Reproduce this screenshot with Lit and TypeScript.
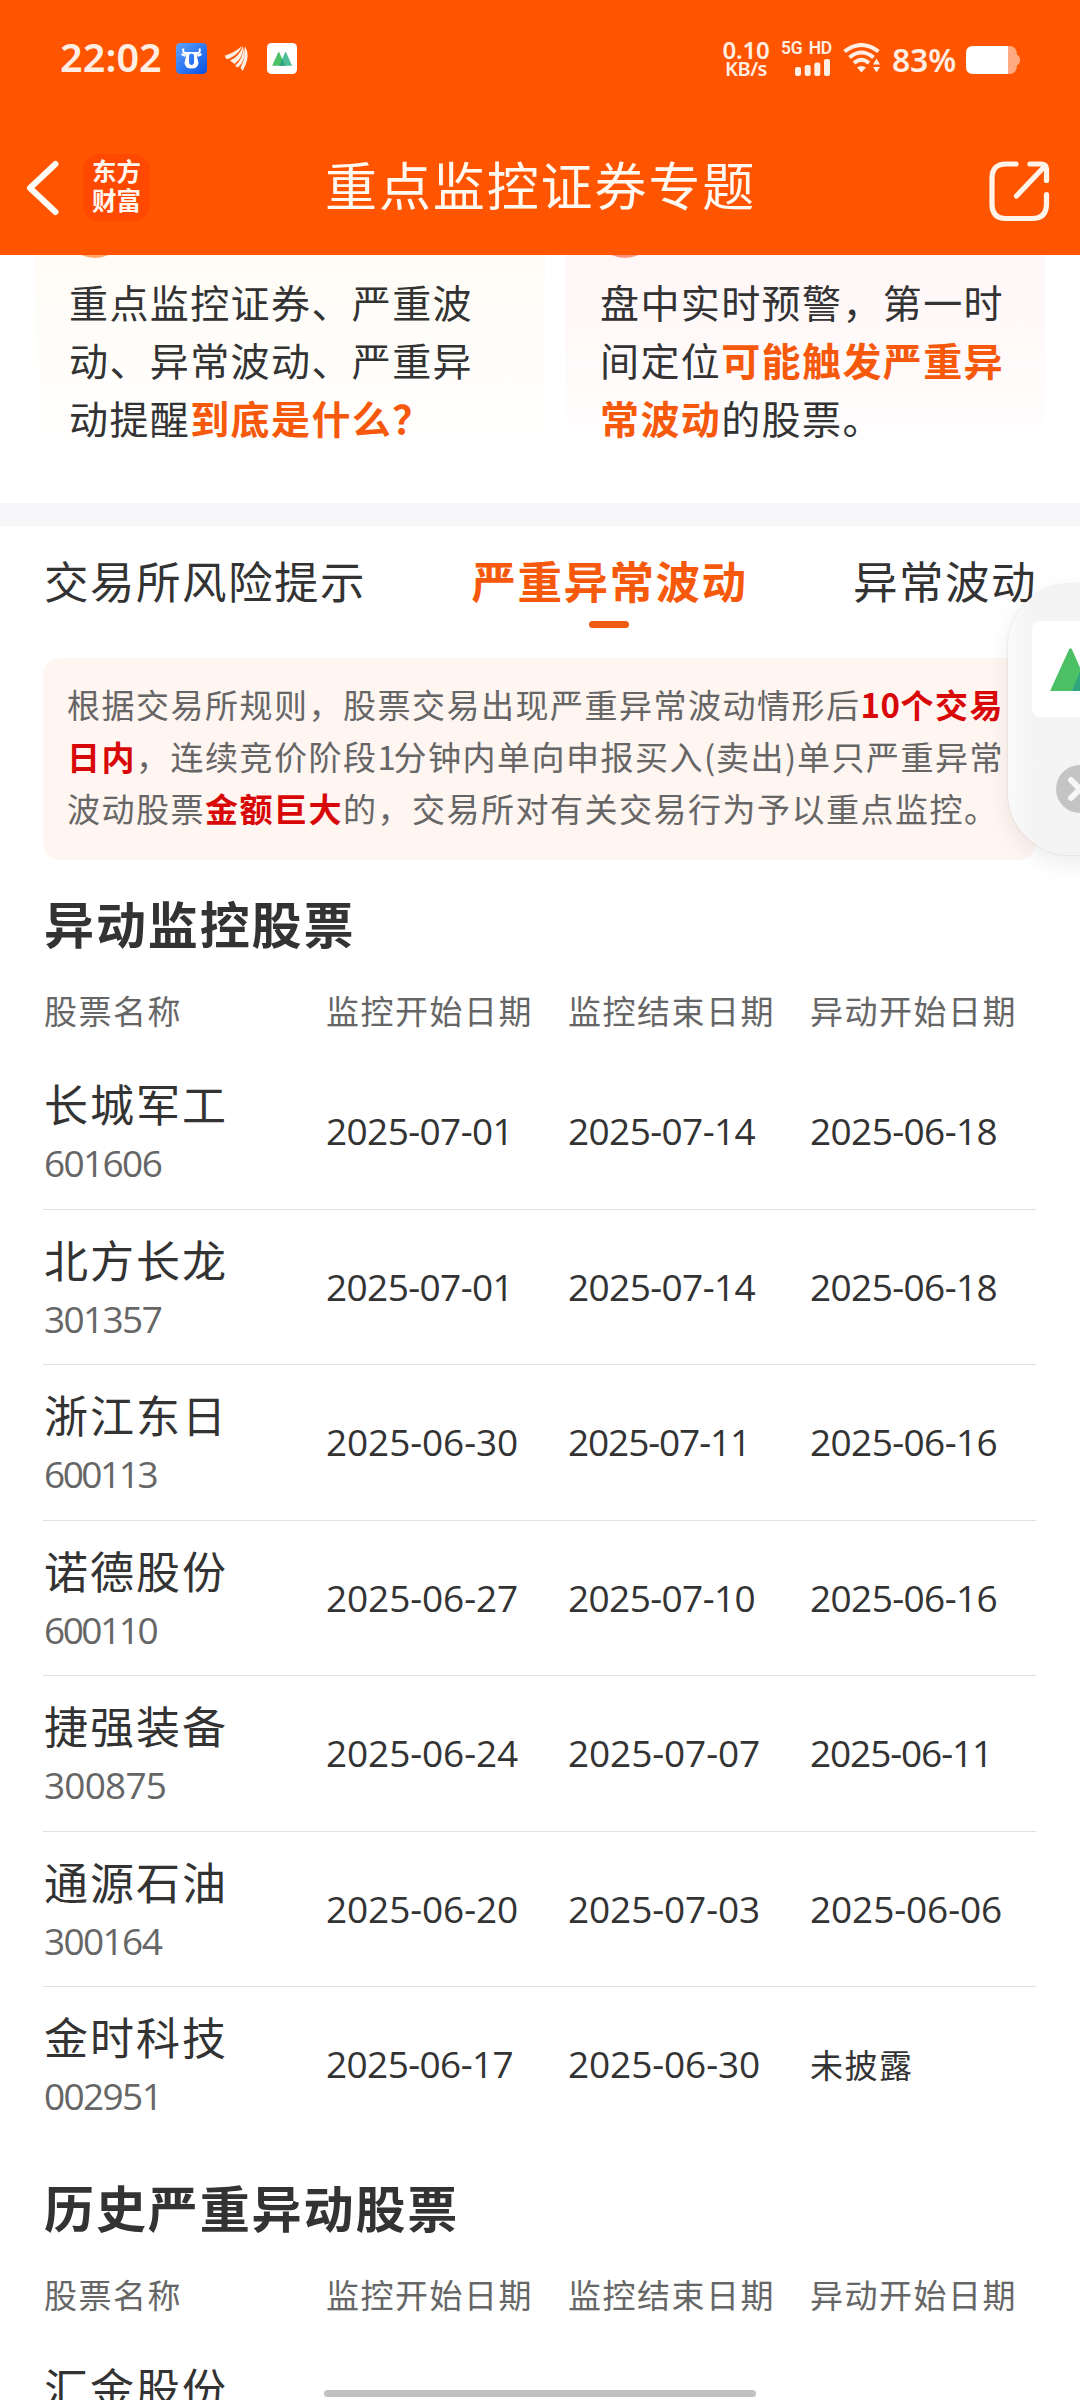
import { LitElement, html, css, svg } from "lit";
import { customElement, property } from "lit/decorators.js";
import { styleMap } from "lit/directives/style-map.js";

interface Stock {
  name: string;
  code?: string;
  start?: string;
  end?: string;
  move?: string;
}

const ACTIVE: Stock[] = [
  { name: "长城军工", code: "601606", start: "2025-07-01", end: "2025-07-14", move: "2025-06-18" },
  { name: "北方长龙", code: "301357", start: "2025-07-01", end: "2025-07-14", move: "2025-06-18" },
  { name: "浙江东日", code: "600113", start: "2025-06-30", end: "2025-07-11", move: "2025-06-16" },
  { name: "诺德股份", code: "600110", start: "2025-06-27", end: "2025-07-10", move: "2025-06-16" },
  { name: "捷强装备", code: "300875", start: "2025-06-24", end: "2025-07-07", move: "2025-06-11" },
  { name: "通源石油", code: "300164", start: "2025-06-20", end: "2025-07-03", move: "2025-06-06" },
  { name: "金时科技", code: "002951", start: "2025-06-17", end: "2025-06-30", move: "未披露" },
];

const HISTORY: Stock[] = [{ name: "汇金股份" }];

const COLUMNS = ["股票名称", "监控开始日期", "监控结束日期", "异动开始日期"];

/* Figures are set proportionally: every 1 in a number takes about 5px less. */
const tracking = (text = "", base = 0) => {
  const ones = text.split("1").length - 1;
  return styleMap({ letterSpacing: `${(base - (5 * ones) / Math.max(text.length, 1)).toFixed(2)}px` });
};

const peaks = svg`
  <path d="M1.5 43 20 2.5Q21.5 0 23 2.5L41 43Q41 44 40 44H2Q1 44 1.5 43Z" fill="#4cc065" />
  <path d="M23 43 41 2.5Q42.500 0 44 2.500L62 43Q62 44 61 44H24Q23 44 23 43Z" fill="#4fbf9b" />
  <path d="M32 22 41.500 44H23Z" fill="#2fa57c" />`;

@customElement("status-bar")
export class StatusBar extends LitElement {
  static styles = css`
    :host {
      display: flex;
      justify-content: space-between;
      height: 115px;
      box-sizing: border-box;
      padding: 0 60px 0 60px;
      color: #ffeee3;
      font-family: "Noto Sans", "Noto Sans CJK SC", sans-serif;
      font-weight: 600;
    }
    .left, .right { display: flex; align-items: center; height: 116px; }
    .time { width: 116px; font-size: 39.500px; line-height: 50px; letter-spacing: 0.100px; padding-bottom: 2px; }
    .left svg { display: block; margin-right: 18px; }
    .left .bird { margin-right: 19px; }
    .speed { display: flex; flex-direction: column; width: 50px; margin-right: 10px; text-align: center; font-size: 24px; line-height: 21px; letter-spacing: -0.200px; }
    .unit { font-size: 20px; line-height: 17px; letter-spacing: -0.500px; }
    .cell { width: 50px; margin-right: 12px; }
    .net { display: block; font-family: Roboto, sans-serif; font-weight: 600; font-size: 17.500px; line-height: 16px; text-align: right; white-space: nowrap; letter-spacing: -0.200px; word-spacing: 2px; }
    .cell svg { display: block; margin: 3px 0 0 14px; }
    .wifi { display: block; margin-right: 11px; }
    .pct { width: 74px; font-size: 32px; line-height: 44px; padding-top: 4px; letter-spacing: -0.200px; white-space: nowrap; }
    .batt { display: block; margin-top: 3px; }
  `;
  render() {
    return html`
      <div class="left">
        <span class="time">22:02</span>
        <svg width="31" height="31" viewBox="0 0 31 31">
          <defs>
            <linearGradient id="bull" x1="0" y1="0" x2="1" y2="1">
              <stop offset="0" stop-color="#63a4fa" /><stop offset="0.55" stop-color="#2b76f2" /><stop offset="1" stop-color="#0a4fe0" />
            </linearGradient>
          </defs>
          <rect width="31" height="31" rx="4.500" fill="url(#bull)" />
          <path d="M7.500 5.500Q6 9.500 10 10.500M23.500 5.500Q25 9.500 21 10.500" fill="none" stroke="#fff" stroke-width="2" />
          <path d="M5.500 11 9.500 13M25.500 11 21.500 13" stroke="#fff" stroke-width="2" />
          <path fill-rule="evenodd" fill="#fff" d="M9 9H22L21 13.500 22.500 20Q22 25.500 15.500 25.500Q9 25.500 8.500 20L10 13.500ZM15.500 10.500Q13 10.500 13 13V19Q13 22 15.500 22Q18 22 18 19V13Q18 10.500 15.500 10.500Z" />
        </svg>
        <svg class="bird" width="23" height="26" viewBox="0 0 23 26" fill="#ffeee3">
          <path d="M0 10.500Q9 8 17 1Q14 9 4.500 13.500Q1.500 14.500 0.500 13Z" />
          <path d="M5 15.500Q14 12 18 1Q19 12 9.500 19Z" />
          <path d="M10 21Q18 14 19 1.500Q21.500 10 16.500 18.500L13 22.500Z" />
          <path d="M15.500 22.500Q20.500 14 20 1Q25 10 20.500 20L17.500 26Z" />
        </svg>
        <svg width="30" height="31" viewBox="0 0 30 31">
          <rect width="30" height="31" rx="4.500" fill="#fff" />
          <g transform="translate(4.800 8.500) scale(0.325)">${peaks}</g>
        </svg>
      </div>
      <div class="right">
        <div class="speed"><span>0.10</span><span class="unit">KB/s</span></div>
        <div class="cell">
          <span class="net">5G HD</span>
          <svg width="36" height="17" viewBox="0 0 36 17" fill="#ffeee3">
            <rect x="0" y="8" width="6" height="9" rx="2" /><rect x="9.700" y="6" width="6" height="11" rx="2" />
            <rect x="19.300" y="3.500" width="6" height="13.500" rx="2" /><rect x="29" y="0" width="6" height="17" rx="2" />
          </svg>
        </div>
        <svg class="wifi" width="38" height="30" viewBox="0 0 38 30">
          <g fill="none" stroke="#ffeee3" stroke-width="4">
            <path d="M1.500 8.500Q18.500-4.500 35.500 8.500" /><path d="M6.500 14.500Q18.500 4.500 30.500 14.500" />
            <path d="M11 20Q18.500 13.500 26 20" />
          </g>
          <path d="M14 24.500Q18.500 21.500 23 24.500L18.500 29.500Z" fill="#ffeee3" />
          <path d="M30 21.500 33.500 15.500 37 21.500ZM30 24 33.500 29.500 37 24Z" fill="#ffeee3" />
        </svg>
        <span class="pct">83%</span>
        <svg class="batt" width="54" height="28" viewBox="0 0 54 28">
          <path d="M8 0H43Q51 0 51 9Q54 9.500 54 14Q54 18.500 51 19Q51 28 43 28H8Z" fill="#ffaa80" />
          <path d="M7 0H42V28H7Q0 28 0 21V7Q0 0 7 0Z" fill="#fff" />
        </svg>
      </div>
    `;
  }
}

@customElement("nav-bar")
export class NavBar extends LitElement {
  static styles = css`
    :host {
      display: grid;
      grid-template-columns: 325px 1fr 326px;
      height: 140px;
      align-items: center;
      color: #fff9f2;
    }
    .lead { display: flex; align-items: center; gap: 24px; padding: 5px 0 0 26px; }
    .lead svg { display: block; }
    .logo {
      width: 67px; height: 67px; box-sizing: border-box; padding-top: 3px; border-radius: 16px; background: #ff4800;
      font-size: 24.500px; line-height: 28.500px; font-weight: 700; text-align: center;
    }
    .title { font-size: 52px; letter-spacing: 1.900px; line-height: 70px; white-space: nowrap; font-weight: 400; margin: 0 0 2px; }
    .share { display: block; justify-self: end; margin: 12px 29px 0 0; transform: translateX(-3px); }
  `;
  render() {
    return html`
      <div class="lead">
        <svg width="33" height="56" viewBox="0 0 33 56" fill="none" stroke="#fffdf8" stroke-width="6" stroke-linecap="round" stroke-linejoin="round">
          <path d="M29.500 4 4 28 29.500 52" />
        </svg>
        <div class="logo">东方<br />财富</div>
      </div>
      <h1 class="title">重点监控证券专题</h1>
      <svg class="share" width="61" height="61" viewBox="0 0 61 61" fill="none" stroke="#fff4ea" stroke-width="5.200" stroke-linecap="round" stroke-linejoin="round">
        <path d="M27 3H17Q3 3 3 17V43Q3 57.500 17 57.500H43Q57.500 57.500 57.500 43V33.500" />
        <path d="M41 3H52Q57.500 3 57.500 8.500V19.500M55.500 5.500 27.500 35" />
      </svg>
    `;
  }
}

@customElement("intro-cards")
export class IntroCards extends LitElement {
  static styles = css`
    :host { display: grid; grid-template-columns: 510px 480px; gap: 20px; height: 248px; padding-left: 35px; }
    .card { position: relative; overflow: hidden; height: 215px; box-sizing: border-box; padding: 17px 0 0 35px; }
    .card.cream { background: linear-gradient(#fffcf6, #fffefc 60%, #fff); padding-left: 34px; }
    .card.rose { background: linear-gradient(#fff6f7, #fffbfb 60%, #fff); }
    .card p { margin: 0; font-size: 39px; letter-spacing: 1.400px; line-height: 58px; color: #333; white-space: nowrap; }
    .card b { color: #f6590b; }
    .dot { position: absolute; width: 64px; height: 64px; top: -61.500px; border-radius: 50%; }
    .cream .dot { left: 28px; background: #ffa766; }
    .rose .dot { left: 28px; background: #ff9580; }
  `;
  render() {
    return html`
      <div class="card cream">
        <span class="dot"></span>
        <p>重点监控证券、严重波<br />动、异常波动、严重异<br />动提醒<b>到底是什么？</b></p>
      </div>
      <div class="card rose">
        <span class="dot"></span>
        <p>盘中实时预警，第一时<br />间定位<b>可能触发严重异</b><br /><b>常波动</b>的股票。</p>
      </div>
    `;
  }
}

@customElement("topic-tabs")
export class TopicTabs extends LitElement {
  static styles = css`
    :host { display: flex; justify-content: space-between; height: 132px; box-sizing: border-box; padding: 22px 43px 0 44px; }
    .tab { font-size: 44.500px; letter-spacing: 1.500px; line-height: 64px; color: #333; white-space: nowrap; }
    .tab.on { font-weight: 700; color: #f6590b; }
    .tab.on::after { content: ""; display: block; width: 40px; height: 7px; margin: 8.500px auto 0; border-radius: 3.500px; background: #ee5b12; }
  `;
  render() {
    return html`
      <div class="tab">交易所风险提示</div>
      <div class="tab on">严重异常波动</div>
      <div class="tab">异常波动</div>
    `;
  }
}

@customElement("rule-note")
export class RuleNote extends LitElement {
  static styles = css`
    :host { display: block; margin: 0 44px 0 43px; height: 202px; box-sizing: border-box; padding: 19.500px 0 0 24px; border-radius: 17px; background: #fff5f1; }
    p { margin: 0; font-size: 33px; letter-spacing: 1.500px; line-height: 52px; color: #666; white-space: nowrap; }
    b { color: #d90808; }
    .num { letter-spacing: 0.500px; }
    .one { letter-spacing: -2.300px; }
    .paren { letter-spacing: 0.800px; }
  `;
  render() {
    return html`
      <p>
        根据交易所规则，股票交易出现严重异常波动情形后<b><span class="num">10</span>个交易</b><br />
        <b>日内</b>，连续竞价阶段<span class="one">1</span>分钟内单向申报买入<span class="paren">(</span>卖出<span class="paren">)</span>单只严重异常<br />
        波动股票<b>金额巨大</b>的，交易所对有关交易行为予以重点监控。
      </p>
    `;
  }
}

@customElement("stock-table")
export class StockTable extends LitElement {
  @property() heading = "";
  @property({ attribute: false }) stocks: Stock[] = [];

  static styles = css`
    :host { display: block; padding: 0 44px 0 43px; }
    h2 { margin: 0; padding-left: 1px; height: 130px; line-height: 125px; font-size: 50px; letter-spacing: 1.900px; font-weight: 700; color: #333; }
    .line { display: grid; grid-template-columns: 282px 242px 242px 1fr; padding-left: 1px; white-space: nowrap; }
    .head { height: 64px; font-size: 33px; letter-spacing: 1.500px; line-height: 40px; color: #666; }
    .row { height: 155.500px; box-sizing: border-box; align-items: center; border-bottom: 1px solid #e0e0e0; color: #333; }
    .row:last-child { border-bottom-color: transparent; }
    .name { font-size: 44px; letter-spacing: 2px; line-height: 62px; padding-top: 1px; }
    .code { font-size: 37px; line-height: 56px; min-height: 56px; color: #666; padding-top: 1px; }
    .code, .date { font-family: "Open Sans", "Noto Sans CJK SC", sans-serif; }
    .date { font-size: 37px; line-height: 50px; }
    .date.text { font-family: "Noto Sans CJK SC", sans-serif; font-size: 33px; }
  `;
  private date(text = "") {
    return /\d/.test(text)
      ? html`<div class="date" style=${tracking(text, -0.1)}>${text}</div>`
      : html`<div class="date text" style=${tracking(text, 1.5)}>${text}</div>`;
  }
  render() {
    return html`
      <h2>${this.heading}</h2>
      <div class="line head">${COLUMNS.map((c) => html`<span>${c}</span>`)}</div>
      <div>
        ${this.stocks.map(
          (s) => html`
            <div class="line row">
              <div>
                <div class="name">${s.name}</div>
                <div class="code" style=${tracking(s.code, -0.8)}>${s.code}</div>
              </div>
              ${[s.start, s.end, s.move].map((d) => this.date(d))}
            </div>
          `
        )}
      </div>
    `;
  }
}

@customElement("float-dock")
export class FloatDock extends LitElement {
  static styles = css`
    :host {
      display: block; position: absolute; left: 1008px; top: 584px; width: 140px; height: 271px; box-sizing: border-box;
      padding: 37px 0 0 24px; border-radius: 62px; background: linear-gradient(90deg, #fafafa, #f4f4f5 28px);
      box-shadow: 0 0 2px rgba(0, 0, 0, 0.16), 0 8px 24px rgba(0, 0, 0, 0.08);
    }
    .app { width: 96px; height: 96px; box-sizing: border-box; padding: 26px 0 0 17px; border-radius: 8px; background: #fff; }
    svg { display: block; }
    .close { margin: 48px 0 0 24px; }
  `;
  render() {
    return html`
      <div class="app"><svg width="63" height="44" viewBox="0 0 63 44">${peaks}</svg></div>
      <svg class="close" width="48" height="48" viewBox="0 0 48 48">
        <circle cx="24" cy="24" r="24" fill="#c4c4c4" />
        <path d="M15 15 33 33M33 15 15 33" stroke="#f7f7f7" stroke-width="6" stroke-linecap="round" />
      </svg>
    `;
  }
}

@customElement("app-root")
export class AppRoot extends LitElement {
  static styles = css`
    :host {
      display: block; position: relative; width: 1080px; height: 2400px; overflow: hidden; background: #fff;
      font-family: "Noto Sans CJK SC", sans-serif;
    }
    .top { background: #ff5500; height: 255px; }
    .gap { height: 23px; background: #f7f7fa; }
    .history { padding-top: 1.500px; }
    .home { position: absolute; left: 324px; top: 2390px; width: 432px; height: 7px; border-radius: 4px; background: #c1c1c1; }
  `;
  render() {
    return html`
      <div class="top"><status-bar></status-bar><nav-bar></nav-bar></div>
      <intro-cards></intro-cards>
      <div class="gap"></div>
      <topic-tabs></topic-tabs>
      <rule-note></rule-note>
      <stock-table heading="异动监控股票" .stocks=${ACTIVE}></stock-table>
      <div class="history"><stock-table heading="历史严重异动股票" .stocks=${HISTORY}></stock-table></div>
      <float-dock></float-dock>
      <div class="home"></div>
    `;
  }
}
